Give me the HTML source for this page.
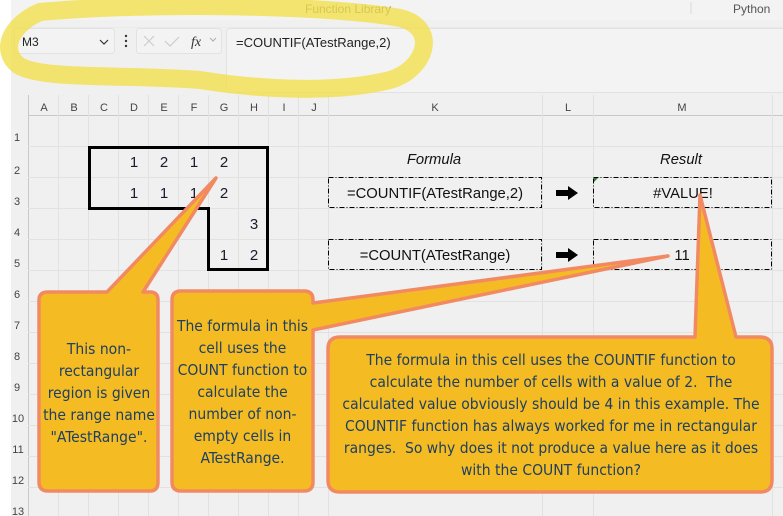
<!DOCTYPE html>
<html><head><style>
html,body{margin:0;padding:0;width:783px;height:516px;overflow:hidden;background:#f0f0f0;font-family:"Liberation Sans",sans-serif}
svg{position:absolute;left:0;top:0}
.cb{position:absolute;color:#1f3f63;font-family:"DejaVu Sans Condensed","Liberation Sans",sans-serif;font-size:15.5px;line-height:22px;text-align:center;white-space:nowrap}
</style></head><body>
<svg width="783" height="516" viewBox="0 0 783 516">
<rect x="0" y="0" width="783" height="516" fill="#f0f0f0"/>
<rect x="0" y="0" width="11" height="516" fill="#ffffff"/>
<rect x="11" y="0" width="772" height="20" fill="#f3f3f3"/>
<line x1="691" y1="2" x2="691" y2="14" stroke="#d8d8d8"/>
<text x="305" y="13" font-size="12" fill="#666">Function Library</text>
<text x="733" y="13" font-size="12" fill="#555">Python</text>
<line x1="11" y1="28" x2="783" y2="28" stroke="#e3e3e3"/>
<rect x="11" y="28" width="772" height="67" fill="#f0f0f0"/>
<rect x="14.5" y="28.5" width="100" height="25" rx="3" fill="#f3f3f3" stroke="#e2e2e2"/>
<text x="22" y="46" font-size="12" fill="#222">M3</text>
<path d="M100 40 l4 4 l4 -4" fill="none" stroke="#333" stroke-width="1.2"/>
<circle cx="126" cy="36" r="1.2" fill="#333"/><circle cx="126" cy="41" r="1.2" fill="#333"/><circle cx="126" cy="46" r="1.2" fill="#333"/>
<rect x="136.5" y="28.5" width="85" height="25" rx="3" fill="#f3f3f3" stroke="#e2e2e2"/>
<path d="M144 36 l10 10 M154 36 l-10 10" stroke="#ccc" stroke-width="1.2"/>
<path d="M165 41 l5 5 l9 -9" fill="none" stroke="#ccc" stroke-width="1.2"/>
<text x="191" y="46" font-size="14" font-style="italic" font-family="Liberation Serif" fill="#333">fx</text>
<path d="M210 38 l3 3 l3 -3" fill="none" stroke="#aaa"/>
<rect x="226.5" y="28.5" width="560" height="64" rx="3" fill="#f3f3f3" stroke="#e2e2e2"/>
<text x="236" y="47" font-size="13" fill="#222">=COUNTIF(ATestRange,2)</text>
<rect x="11" y="95" width="772" height="20" fill="#f0f0f0"/>
<line x1="28" y1="115.5" x2="783" y2="115.5" stroke="#c8c8c8"/>
<line x1="28.5" y1="95" x2="28.5" y2="516" stroke="#c8c8c8"/>
<g font-size="11" fill="#444" text-anchor="middle">
<text x="44" y="111">A</text><text x="74" y="111">B</text><text x="104" y="111">C</text><text x="134" y="111">D</text><text x="164" y="111">E</text><text x="194" y="111">F</text><text x="224" y="111">G</text><text x="254" y="111">H</text><text x="284" y="111">I</text><text x="314" y="111">J</text><text x="435" y="111">K</text><text x="568" y="111">L</text><text x="682" y="111">M</text>
</g>
<g font-size="11" fill="#444" text-anchor="middle">
<text x="17" y="141">1</text><text x="17" y="174">2</text><text x="17" y="205">3</text><text x="17" y="236">4</text><text x="17" y="267">5</text><text x="17" y="298">6</text><text x="17" y="329">7</text><text x="17" y="360">8</text><text x="17" y="391">9</text><text x="18" y="422">10</text><text x="18" y="453">11</text><text x="18" y="484">12</text><text x="18" y="515">13</text>
</g>
<g stroke="#e2e2e2" stroke-width="1">
<path d="M58.5 95V516M88.5 95V516M118.5 95V516M148.5 95V516M178.5 95V516M208.5 95V516M238.5 95V516M268.5 95V516M298.5 95V516M328.5 95V516M542.5 95V516M593.5 95V516M772.5 95V516"/>
<path d="M28 146.5H783M28 177.5H783M28 208.5H783M28 239.5H783M28 270.5H783M28 301.5H783M28 332.5H783M28 363.5H783M28 394.5H783M28 425.5H783M28 456.5H783M28 487.5H783"/>
</g>
<path d="M89.5 147.5H267.5V269.5H208.5V208.5H89.5Z" fill="none" stroke="#000" stroke-width="3"/>
<g font-size="15" fill="#1a1a2e" text-anchor="middle">
<text x="134" y="167">1</text><text x="164" y="167">2</text><text x="194" y="167">1</text><text x="224" y="167">2</text>
<text x="134" y="198">1</text><text x="164" y="198">1</text><text x="194" y="198">1</text><text x="224" y="198">2</text>
<text x="254" y="229">3</text><text x="224" y="260">1</text><text x="254" y="260">2</text>
</g>
<g font-size="14.8" fill="#111" text-anchor="middle">
<text x="434" y="164" font-style="italic">Formula</text>
<text x="681" y="164" font-style="italic">Result</text>
<text x="435" y="198">=COUNTIF(ATestRange,2)</text>
<text x="683" y="198">#VALUE!</text>
<text x="435" y="260">=COUNT(ATestRange)</text>
<text x="682" y="260">11</text>
</g>
<g fill="none" stroke="#000" stroke-width="1" stroke-dasharray="5,2,1,2">
<rect x="328.5" y="177.5" width="213" height="30"/>
<rect x="593.5" y="177.5" width="178" height="30"/>
<rect x="328.5" y="239.5" width="213" height="30"/>
<rect x="593.5" y="239.5" width="178" height="30"/>
</g>
<path d="M556 190h12v-4l10 7l-10 7v-4h-12z" fill="#000"/>
<path d="M556 252h12v-4l10 7l-10 7v-4h-12z" fill="#000"/>
<path d="M594 178l4 0l-4 4z" fill="#1a8a2a"/>
<path d="M40 12 C150 2 330 5 400 18 C440 28 425 70 390 80 C330 95 250 88 200 80 C120 74 40 80 18 65 C0 50 10 25 40 12 Z" fill="none" stroke="#f2e04d" stroke-opacity="0.8" stroke-width="18"/>
<g fill="#f4bc22" stroke="#f18a62" stroke-width="3.5" stroke-linejoin="round">
<path d="M48 292H107L216 178L143 292H150Q158 292 158 300V482Q158 491 150 491H48Q39 491 39 482V300Q39 292 48 292Z"/>
<path d="M181 291H304Q313 291 313 300V303L668 256L313 330V482Q313 491 304 491H181Q172 491 172 482V300Q172 291 181 291Z"/>
<path d="M340 337H695L700 195L736 337H760Q772 337 772 349V480Q772 492 760 492H340Q328 492 328 480V349Q328 337 340 337Z"/>
</g>
</svg>
<div class="cb" style="left:40px;top:338px;width:118px">This non-<br>rectangular<br>region is given<br>the range name<br>"ATestRange".</div>
<div class="cb" style="left:172px;top:315px;width:141px">The formula in this<br>cell uses the<br>COUNT function to<br>calculate the<br>number of non-<br>empty cells in<br>ATestRange.</div>
<div class="cb" style="left:330px;top:349px;width:442px">The formula in this cell uses the COUNTIF function to<br>calculate the number of cells with a value of 2.&nbsp; The<br>calculated value obviously should be 4 in this example. The<br>COUNTIF function has always worked for me in rectangular<br>ranges.&nbsp; So why does it not produce a value here as it does<br>with the COUNT function?</div>
</body></html>
